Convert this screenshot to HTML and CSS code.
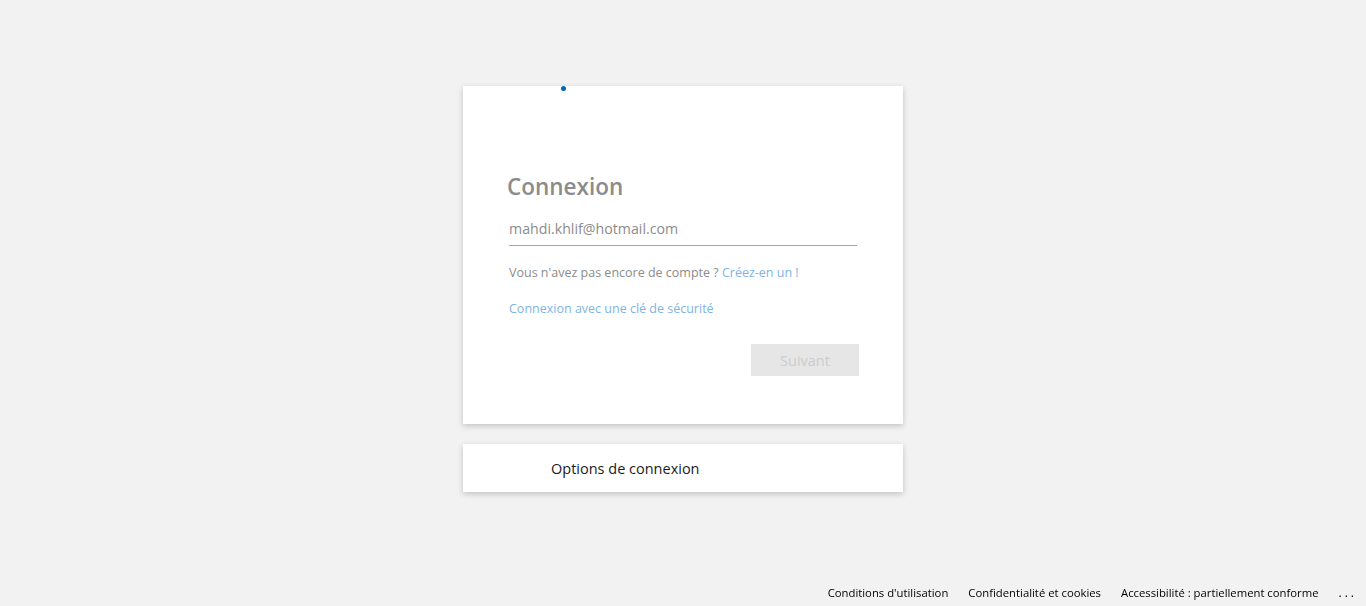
FILE: index.html
```html
<!DOCTYPE html>
<html lang="fr">
<head>
<meta charset="utf-8">
<title>Connexion</title>
<link rel="stylesheet" href="styles.css">
</head>
<body>
<main class="page">
  <section class="card">
    <span class="progress-dot"></span>
    <div class="logo-space"></div>
    <h1 class="title">Connexion</h1>
    <div class="field">mahdi.khlif@hotmail.com</div>
    <p class="hint">Vous n'avez pas encore de compte ? <a class="link" href="#">Créez-en un !</a></p>
    <p class="hint second"><a class="link" href="#">Connexion avec une clé de sécurité</a></p>
    <div class="actions"><button class="btn" type="button">Suivant</button></div>
  </section>
  <section class="card options">
    <span class="options-text">Options de connexion</span>
  </section>
</main>
<footer class="footer">
  <a href="#">Conditions d'utilisation</a>
  <a href="#">Confidentialité et cookies</a>
  <a href="#">Accessibilité : partiellement conforme</a>
  <a href="#" class="more">...</a>
</footer>
</body>
</html>
```
FILE: styles.css
```css
html, body {
  margin: 0;
  padding: 0;
  height: 100%;
}
body {
  background: #f2f2f2;
  font-family: "Open Sans", "Noto Sans", sans-serif;
  color: #1b1b1b;
  overflow: hidden;
}
.page {
  display: flex;
  flex-direction: column;
  align-items: center;
  padding-top: 86px;
  gap: 20px;
}
.card {
  position: relative;
  width: 440px;
  box-sizing: border-box;
  background: #fff;
  box-shadow: 0 2px 6px rgba(0, 0, 0, 0.2);
  padding: 44px 44px 48px;
}
.progress-dot {
  position: absolute;
  top: 0;
  left: 98px;
  width: 5px;
  height: 5px;
  border-radius: 50%;
  background: #0067b8;
}
.logo-space {
  height: 43px;
}
.title {
  margin: 0;
  font-size: 22.5px;
  line-height: 28px;
  font-weight: 600;
  color: #8c8c8c;
}
.field {
  margin: 9px 2px 0;
  height: 36px;
  padding-top: 2px;
  line-height: 34px;
  font-size: 14.2px;
  color: #8c8c8c;
  border-bottom: 1px solid #a6a6a6;
  box-sizing: border-box;
}
.hint {
  margin: 17px 2px 0;
  font-size: 12.5px;
  line-height: 20px;
  color: #8c8c8c;
}
.hint.second {
  margin-top: 16px;
}
.link {
  color: #7eb4e4;
  text-decoration: none;
}
.actions {
  display: flex;
  justify-content: flex-end;
  margin-top: 25px;
}
.btn {
  width: 108px;
  height: 32px;
  border: none;
  background: #e6e6e6;
  color: #cccccc;
  font-family: inherit;
  font-size: 14.5px;
  padding: 0;
}
.options {
  padding: 0 0 0 88px;
  height: 48px;
  display: flex;
  align-items: center;
}
.options-text {
  font-size: 14.5px;
  color: #1b1b1b;
}
.footer {
  position: fixed;
  right: 0;
  bottom: 0;
  display: flex;
  align-items: center;
  height: 28px;
  padding-right: 9px;
}
.footer a {
  font-size: 11.3px;
  color: #000;
  text-decoration: none;
  margin-left: 20px;
}
.footer .more {
  letter-spacing: 3px;
  font-size: 12px;
}
```
